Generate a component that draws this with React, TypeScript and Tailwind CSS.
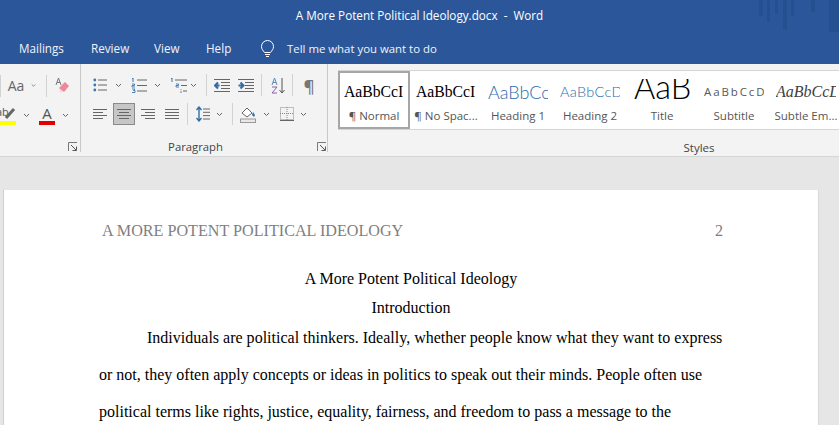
import React from "react";

const ui = { fontFamily: '"Open Sans", "Noto Sans", sans-serif' };
const serif = { fontFamily: '"Liberation Serif", serif' };
const lato = { fontFamily: "Lato, sans-serif" };

const Cell = ({ w, children }: { w: number; children?: React.ReactNode }) => (
  <div className="flex h-full shrink-0 items-center justify-center" style={{ width: w }}>
    {children}
  </div>
);

const Chev = ({ w = 12 }: { w?: number }) => (
  <Cell w={w}>
    <svg width="7" height="5" viewBox="0 0 7 5" fill="none" stroke="#666" strokeWidth="1">
      <path d="M1 1l2.5 2.5L6 1" />
    </svg>
  </Cell>
);

const Sep = ({ w = 1 }: { w?: number }) => (
  <Cell w={w}>
    <div className="h-[22px] w-px bg-[#d2d2d2]" />
  </Cell>
);

const Lines = ({ kind }: { kind: "left" | "center" | "right" | "just" }) => {
  const rows =
    kind === "left"
      ? [[0, 14], [0, 10], [0, 14], [0, 10]]
      : kind === "center"
        ? [[0, 14], [2, 12], [0, 14], [2, 12]]
        : kind === "right"
          ? [[0, 14], [4, 14], [0, 14], [4, 14]]
          : [[0, 14], [0, 14], [0, 14], [0, 14]];
  return (
    <svg width="14" height="12" viewBox="0 0 14 12" stroke="#666" strokeWidth="1">
      {rows.map((r, i) => (
        <path key={i} d={`M${r[0]} ${1.5 + i * 3}H${r[1]}`} />
      ))}
    </svg>
  );
};

const Launcher = () => (
  <svg width="10" height="10" viewBox="0 0 10 10" fill="none" stroke="#777" strokeWidth="1">
    <path d="M0.5 9V0.5H9" />
    <path d="M3 3l5 5M8.5 4.5v4h-4" stroke="#555" />
  </svg>
);

const Bullets = () => (
  <svg width="14" height="14" viewBox="0 0 14 14" stroke="#666" strokeWidth="1">
    <circle cx="1.8" cy="2" r="1.4" fill="#3b76ad" stroke="none" />
    <circle cx="1.8" cy="7" r="1.4" fill="#3b76ad" stroke="none" />
    <circle cx="1.8" cy="12" r="1.4" fill="#3b76ad" stroke="none" />
    <path d="M5 2h9M5 7h9M5 12h9" />
  </svg>
);

const Numbering = () => (
  <svg width="16" height="16" viewBox="0 0 16 16" stroke="#666" strokeWidth="1" fill="none">
    <path d="M2 1v4M1 2l1-1" stroke="#3b76ad" />
    <path d="M1 7h2.5v1.5H1V10h3" stroke="#3b76ad" strokeWidth="0.9" />
    <path d="M1 12h3l-1.5 1.5H4V15.500H1" stroke="#3b76ad" strokeWidth="0.9" />
    <path d="M6 3h10M6 8.500h10M6 14h10" />
  </svg>
);

const Multi = () => (
  <svg width="17" height="16" viewBox="0 0 17 16" stroke="#666" strokeWidth="1" fill="none">
    <path d="M2 1v4M1 2l1-1" stroke="#3b76ad" />
    <path d="M6 7h2.500v1.500H6V10h3" stroke="#3b76ad" strokeWidth="0.9" />
    <path d="M11 14v2M11 12v0.800" stroke="#777" />
    <path d="M5 3h12M11 8.500h6M13 14h4" />
  </svg>
);

const Indent = ({ dir }: { dir: "dec" | "inc" }) => (
  <svg width="16" height="14" viewBox="0 0 16 14" stroke="#666" strokeWidth="1" fill="none">
    <path d="M0 1.500h16M7 4.500h9M7 7.500h9M7 10.500h9M0 13.500h16" />
    {dir === "dec" ? (
      <path d="M5.500 7.500H1.500M4 4.500l-3 3 3 3" stroke="#2f6ea8" strokeWidth="2" />
    ) : (
      <path d="M0.500 7.500h4M2.500 4.500l3 3-3 3" stroke="#2f6ea8" strokeWidth="2" />
    )}
  </svg>
);

const Sort = () => (
  <svg width="15" height="17" viewBox="0 0 15 17" fill="none">
    <path d="M1 8L3.500 1 6 8M2 5.500h3" stroke="#5f89b5" strokeWidth="1" />
    <path d="M1 10h5L1 16h5" stroke="#8a5fa8" strokeWidth="1" />
    <path d="M11 1v15M8.500 13l2.500 3 2.500-3" stroke="#555" strokeWidth="1" />
  </svg>
);

const LineSpacing = () => (
  <svg width="14" height="16" viewBox="0 0 14 16" fill="none">
    <path d="M3 1v14M0.500 4L3 1l2.500 3M0.500 12L3 15l2.500-3" stroke="#2f6ea8" strokeWidth="1.400" />
    <path d="M7 3h7M7 6.300h7M7 9.600h7M7 13h7" stroke="#666" />
  </svg>
);

const Shading = () => (
  <svg width="17" height="17" viewBox="0 0 17 17" fill="none">
    <path d="M2 7l5-5 5 5-5 4z" stroke="#666" fill="#fff" />
    <path d="M13 6l2 3-1 2-2-2z" fill="#2f6ea8" />
    <rect x="0.500" y="13" width="15" height="3.500" fill="#e8e8e8" stroke="#999" />
  </svg>
);

const Borders = () => (
  <svg width="14" height="14" viewBox="0 0 14 14" fill="none" stroke="#888" strokeDasharray="1 1">
    <rect x="0.500" y="0.500" width="13" height="12" />
    <path d="M7 0v13M0 6.500h14" />
    <path d="M0 13.500h14" strokeDasharray="none" stroke="#666" />
  </svg>
);

const Eraser = () => (
  <svg width="16" height="18" viewBox="0 0 16 18" fill="none">
    <path d="M1 8L3.500 1 6 8M2 5.500h3" stroke="#777" />
    <path d="M4 11l6-6 4 4-5 6z" fill="#ea8a98" />
    <path d="M4 11l3 3-1 2z" fill="#f4c6cd" />
  </svg>
);

const Highlighter = () => (
  <div className="relative h-[19px] w-[16px] overflow-hidden">
    <span className="absolute -left-[4px] top-[-2px] text-[11px] text-[#555]" style={ui}>
      ab
    </span>
    <svg className="absolute left-0 top-0" width="16" height="15" viewBox="0 0 16 15" fill="none">
      <path d="M6 12L14 3" stroke="#666" strokeWidth="3" />
    </svg>
    <div className="absolute bottom-0 left-0 h-[4px] w-[16px] bg-[#ffff00]" />
  </div>
);

const FontColor = () => (
  <div className="flex w-[16px] flex-col items-center">
    <span className="text-[15px] leading-[14px] text-[#555]" style={ui}>
      A
    </span>
    <div className="mt-[1px] h-[4px] w-[16px] bg-[#e00000]" />
  </div>
);

const Tile = ({
  sample,
  label,
  className,
  selected,
  font,
  box,
}: {
  sample: string;
  label: string;
  className: string;
  selected?: boolean;
  font?: React.CSSProperties;
  box?: string;
}) => (
  <div
    className={
      "flex h-full w-[72px] shrink-0 flex-col items-center overflow-hidden " +
      (selected ? "border-2 border-[#a6a6a6] bg-white" : "pt-[2px]")
    }
  >
    <div
      className={
        "flex shrink-0 justify-start overflow-hidden whitespace-nowrap " +
        (box ?? "mt-[1px] h-[36px] w-[60px] items-center")
      }
    >
      <span className={className} style={font}>
        {sample}
      </span>
    </div>
    <div className="-mt-[3px] whitespace-nowrap text-[11.500px] leading-[18px] text-[#555]" style={ui}>
      {label}
    </div>
  </div>
);

export default function App() {
  return (
    <div className="flex h-[425px] w-[839px] flex-col overflow-hidden bg-[#e6e6e6]">
      <div className="relative h-[64px] shrink-0 bg-[#2b579a] text-white" style={ui}>
        <div className="flex h-[32px] items-center justify-center text-[11.700px]">
          <span className="whitespace-pre">A More Potent Political Ideology.docx  -  Word</span>
        </div>
        <div className="flex h-[33px] items-center pl-[19px] text-[11.700px] text-[#f0f4fa]">
          <span className="w-[72px]">Mailings</span>
          <span className="w-[63px]">Review</span>
          <span className="w-[52px]">View</span>
          <span className="w-[54px]">Help</span>
          <svg className="mr-[12px]" width="15" height="18" viewBox="0 0 15 18" fill="none" stroke="#fff" strokeWidth="1">
            <path d="M4.500 12.500C3 10.500 1.500 9 1.500 6.500a6 6 0 0 1 12 0c0 2.500-1.500 4-3 6z" />
            <path d="M5 14.500h5M6 16.500h3" />
          </svg>
          <span className="text-[11.400px]">Tell me what you want to do</span>
        </div>
        <svg className="absolute right-0 top-0" width="80" height="32" viewBox="0 0 80 32" fill="#25508f">
          <rect x="0" y="0" width="4" height="16" />
          <rect x="8" y="0" width="3" height="22" />
          <rect x="16" y="0" width="3" height="14" />
          <rect x="24" y="0" width="4" height="30" />
          <rect x="32" y="0" width="3" height="16" />
          <rect x="52" y="0" width="4" height="12" />
          <rect x="70" y="0" width="10" height="32" />
        </svg>
      </div>

      <div className="flex h-[93px] shrink-0 border-b border-[#d5d5d5] bg-[#f3f3f3]">
        {/* Font group, cut off on the left */}
        <div className="flex h-[88px] w-[81px] shrink-0 flex-col border-r border-[#c8c8c8] pt-[10px]">
          <div className="flex h-[24px] items-center">
            <Sep />
            <Cell w={30}>
              <span className="text-[14px] text-[#666]" style={ui}>
                Aa
              </span>
            </Cell>
            <Chev w={5} />
            <Cell w={10} />
            <Sep />
            <Cell w={6} />
            <Cell w={20}>
              <Eraser />
            </Cell>
          </div>
          <div className="mt-[7px] flex h-[24px] items-center">
            <Cell w={16}>
              <Highlighter />
            </Cell>
            <Cell w={4} />
            <Chev />
            <Cell w={7} />
            <Cell w={16}>
              <FontColor />
            </Cell>
            <Cell w={4} />
            <Chev />
          </div>
          <div className="mt-[15px] flex justify-end pr-[2px]">
            <Launcher />
          </div>
        </div>

        {/* Paragraph group */}
        <div className="flex h-[88px] w-[247px] shrink-0 flex-col border-r border-[#c8c8c8] pt-[10px]">
          <div className="flex h-[24px] items-center pl-[11px]">
            <Cell w={16}>
              <Bullets />
            </Cell>
            <Cell w={4} />
            <Chev />
            <Cell w={7} />
            <Cell w={16}>
              <Numbering />
            </Cell>
            <Cell w={4} />
            <Chev />
            <Cell w={6} />
            <Cell w={18}>
              <Multi />
            </Cell>
            <Chev />
            <Cell w={7} />
            <Sep />
            <Cell w={7} />
            <Indent dir="dec" />
            <Cell w={8} />
            <Indent dir="inc" />
            <Cell w={7} />
            <Sep />
            <Cell w={9} />
            <Sort />
            <Cell w={6} />
            <Sep />
            <Cell w={8} />
            <Cell w={16}>
              <span className="text-[17px] font-semibold leading-none text-[#777]" style={ui}>
                ¶
              </span>
            </Cell>
          </div>
          <div className="mt-[7px] flex h-[24px] items-center pl-[12px]">
            <Cell w={14}>
              <Lines kind="left" />
            </Cell>
            <Cell w={6} />
            <div className="flex h-[22px] w-[22px] items-center justify-center border border-[#8a8a8a] bg-[#c6c6c6]">
              <Lines kind="center" />
            </div>
            <Cell w={6} />
            <Lines kind="right" />
            <Cell w={10} />
            <Lines kind="just" />
            <Cell w={8} />
            <Sep />
            <Cell w={8} />
            <LineSpacing />
            <Cell w={3} />
            <Chev />
            <Cell w={7} />
            <Sep />
            <Cell w={7} />
            <Shading />
            <Cell w={3} />
            <Chev />
            <Cell w={8} />
            <Borders />
            <Cell w={3} />
            <Chev />
          </div>
          <div className="mt-[16px] flex h-[12px] items-center">
            <div className="w-[237px] pr-[7px] text-center text-[11.300px] text-[#444]" style={ui}>
              Paragraph
            </div>
            <Launcher />
          </div>
        </div>

        {/* Styles group */}
        <div className="flex min-w-0 flex-1 flex-col pl-[10px] pt-[6px]">
          <div className="flex h-[60px] border-y border-[#d5d5d5] bg-white">
            <Tile selected sample="AaBbCcI" label="¶ Normal" className="text-[15.700px] text-black" font={serif} />
            <Tile sample="AaBbCcI" label="¶ No Spac..." className="text-[15.700px] text-black" font={serif} />
            <Tile sample="AaBbCcDd" label="Heading 1" className="text-[18px] font-light text-[#2a6cab]" font={lato} />
            <Tile sample="AaBbCcDd" label="Heading 2" className="text-[14.500px] font-light tracking-[0.3px] text-[#2a6cab]" font={lato} />
            <Tile
              sample="AaB"
              label="Title"
              box="mt-[6px] mb-[7px] h-[24px] w-[56px] items-start"
              className="text-[32.500px] font-light leading-none text-black"
              font={{ ...lato, marginTop: -8 }}
            />
            <Tile sample="AaBbCcDd" label="Subtitle" className="text-[11.500px] tracking-[1.900px] text-[#595959]" font={ui} />
            <Tile sample="AaBbCcDd" label="Subtle Em..." className="text-[16px] italic text-[#404040]" font={serif} />
          </div>
          <div className="mt-[9px] text-center text-[11.500px] text-[#444]" style={{ ...ui, marginLeft: 236, width: 250 }}>
            Styles
          </div>
        </div>
      </div>

      {/* Document */}
      <div className="flex-1 pl-[4px] pt-[33px]">
        <div className="w-[814px] bg-white pl-[95px] pr-[95px] pt-[28px] shadow-[-1px_0_0_#cfcfcf,1px_0_0_#d8d8d8]" style={serif}>
          <div className="flex h-[26px] items-center justify-between pl-[3px] text-[16.150px] text-[#7f7f7f]">
            <span>A MORE POTENT POLITICAL IDEOLOGY</span>
            <span>2</span>
          </div>
          <div className="mt-[20px] text-center text-[16px] leading-[29px] text-black">A More Potent Political Ideology</div>
          <div className="text-center text-[16px] leading-[29px] text-black">Introduction</div>
          <div className="indent-[48px] text-[16.030px] leading-[31px] text-black whitespace-nowrap">
            Individuals are political thinkers. Ideally, whether people know what they want to express
          </div>
          <div className="mt-[6px] text-[16px] leading-[31px] text-black whitespace-nowrap">
            or not, they often apply concepts or ideas in politics to speak out their minds. People often use
          </div>
          <div className="mt-[6px] text-[16px] leading-[31px] text-black whitespace-nowrap">
            political terms like rights, justice, equality, fairness, and freedom to pass a message to the
          </div>
        </div>
      </div>
    </div>
  );
}
